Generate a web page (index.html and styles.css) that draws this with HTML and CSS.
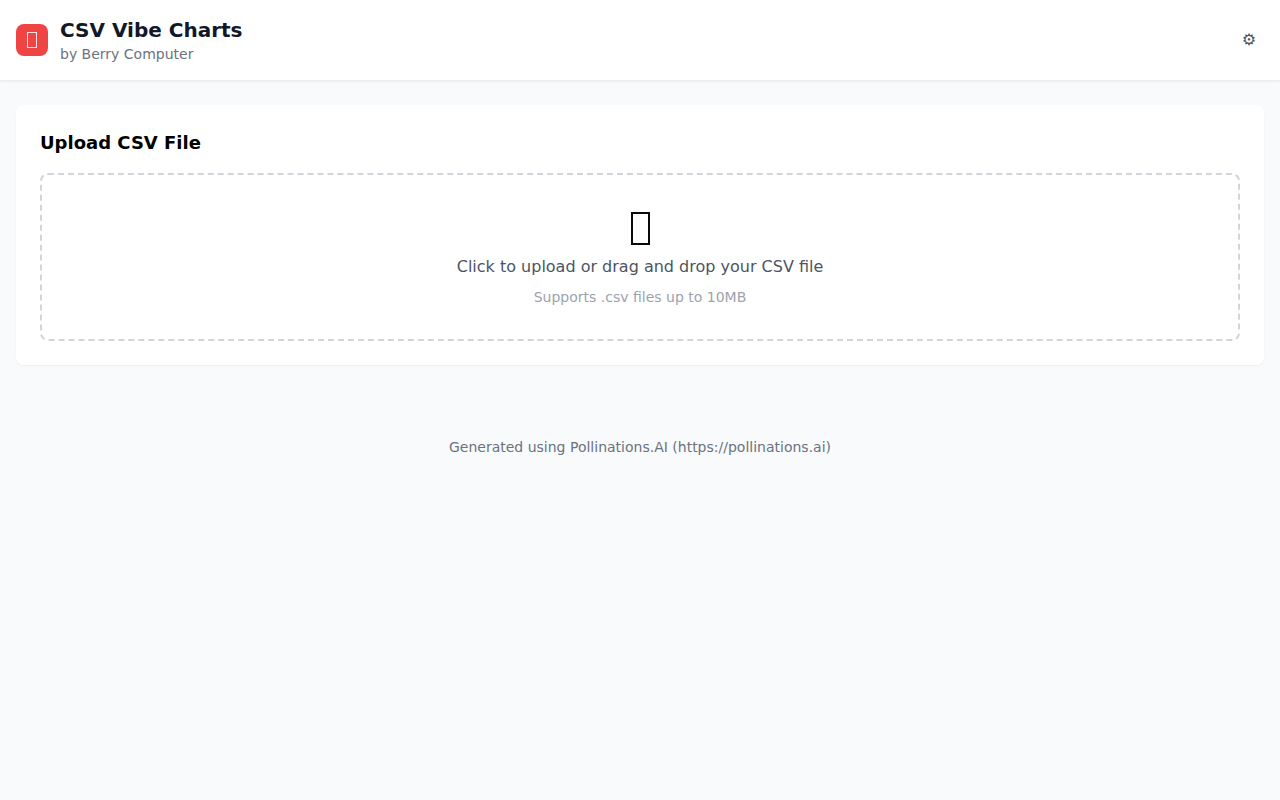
FILE: index.html
```html
<!DOCTYPE html>
<html lang="en">
  <head>
    <meta charset="utf-8">
    <title>CSV Vibe Charts</title>
    <link rel="stylesheet" href="styles.css">
  </head>
  <body>
    <header class="header">
      <div class="brand">
        <div class="logo"><span class="logo-glyph"></span></div>
        <div>
          <h1 class="title">CSV Vibe Charts</h1>
          <p class="subtitle">by Berry Computer</p>
        </div>
      </div>
      <button class="settings" type="button">&#9881;&#xFE0E;</button>
    </header>

    <main class="main">
      <section class="card">
        <h2 class="card-title">Upload CSV File</h2>
        <div class="dropzone">
          <div class="drop-icon"><span class="drop-glyph"></span></div>
          <p class="drop-text">Click to upload or drag and drop your CSV file</p>
          <p class="drop-hint">Supports .csv files up to 10MB</p>
        </div>
      </section>
    </main>

    <footer class="footer">Generated using Pollinations.AI (https://pollinations.ai)</footer>
  </body>
</html>
```

FILE: styles.css
```css
* {
  box-sizing: border-box;
}

html, body {
  height: 100%;
}

body {
  margin: 0;
  background-color: #f9fafb;
  font-family: "DejaVu Sans", sans-serif;
}

h1, h2, p {
  margin: 0;
}

.header {
  display: flex;
  align-items: center;
  justify-content: space-between;
  height: 81px;
  padding: 0 16px;
  border-bottom: 1px solid #eceef1;
  background-color: #fff;
  box-shadow: 0 1px 3px rgba(0, 0, 0, 0.06);
}

.brand {
  display: flex;
  align-items: center;
  gap: 12px;
}

.logo {
  display: flex;
  align-items: center;
  justify-content: center;
  width: 32px;
  height: 32px;
  border-radius: 8px;
  background-color: #ef4444;
}

.logo-glyph {
  width: 10px;
  height: 16px;
  border: 1px solid rgba(255, 255, 255, 0.85);
}

.title {
  color: #111827;
  font-size: 20px;
  font-weight: 700;
  line-height: 28px;
}

.subtitle {
  color: #6b7280;
  font-size: 14px;
  line-height: 20px;
}

.settings {
  padding: 7px 8px 9px;
  border: 0;
  background: none;
  color: #4b5563;
  font-family: inherit;
  font-size: 16px;
}

.main {
  padding: 24px 16px;
}

.card {
  padding: 24px;
  border-radius: 8px;
  background-color: #fff;
  box-shadow: 0 1px 2px rgba(0, 0, 0, 0.05);
}

.card-title {
  margin-bottom: 16px;
  color: #000;
  font-size: 18px;
  font-weight: 700;
  line-height: 28px;
}

.dropzone {
  padding: 32px;
  border: 2px dashed #d1d5db;
  border-radius: 8px;
  text-align: center;
}

.drop-icon {
  display: flex;
  justify-content: center;
  height: 40px;
  margin-bottom: 8px;
  padding-top: 5px;
}

.drop-glyph {
  width: 19px;
  height: 33px;
  border: 2px solid #0a0a0a;
}

.drop-text {
  margin-bottom: 8px;
  color: #4b5563;
  font-size: 16px;
  line-height: 24px;
}

.drop-hint {
  color: #9ca3af;
  font-size: 14px;
  line-height: 20px;
}

.footer {
  padding: 48px 16px 16px;
  color: #6b7280;
  font-size: 14px;
  line-height: 20px;
  text-align: center;
}
```
